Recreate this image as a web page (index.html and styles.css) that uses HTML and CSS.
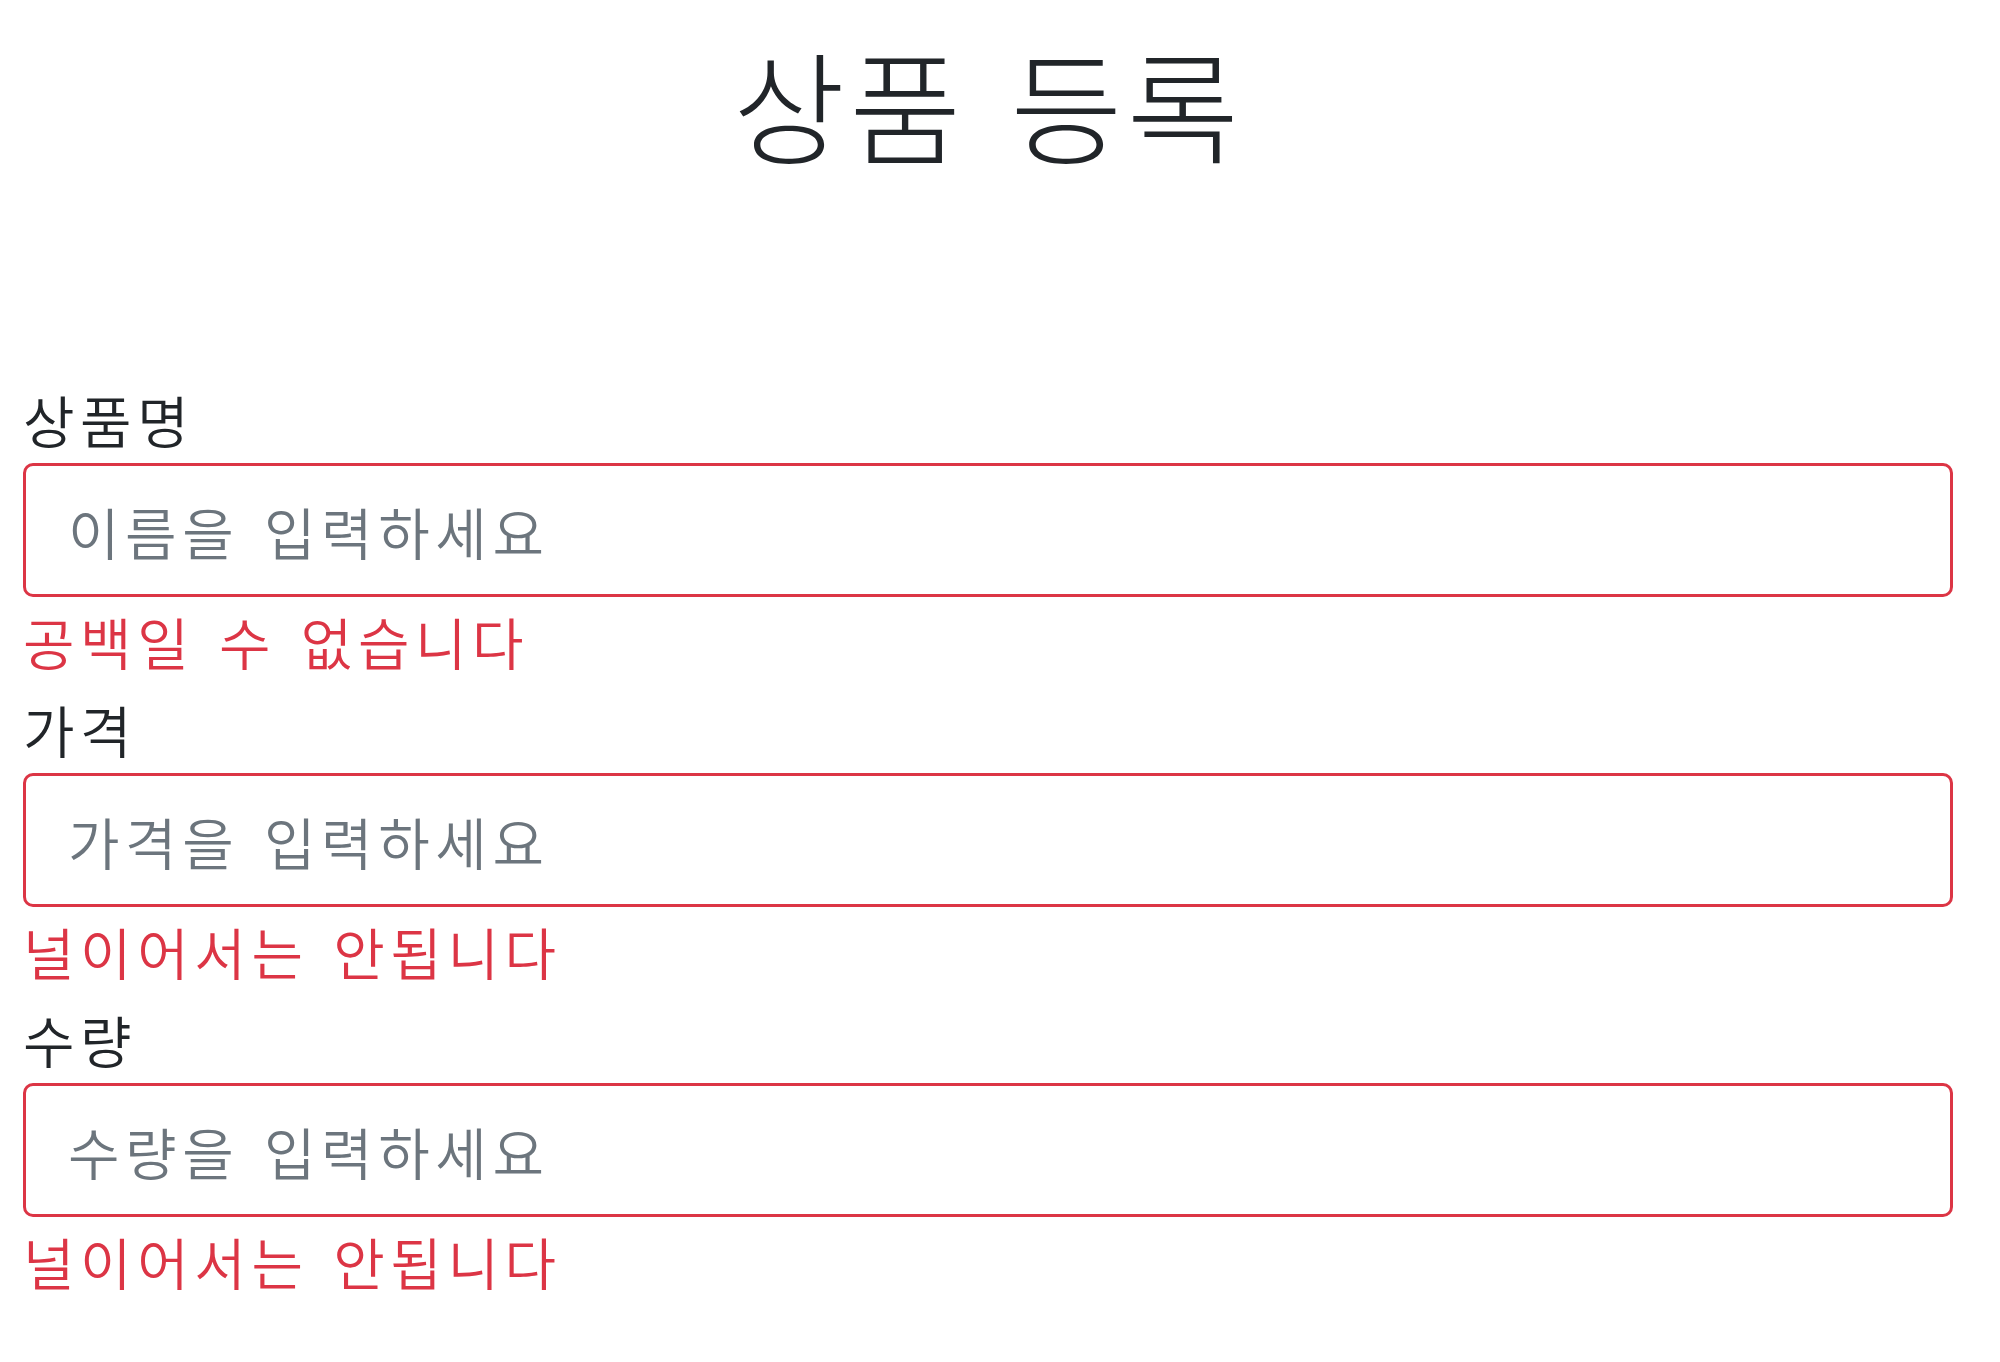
FILE: index.html
```html
<!DOCTYPE html>
<html lang="ko">
<head>
<meta charset="utf-8">
<title>상품 등록</title>
<link rel="stylesheet" href="styles.css">
</head>
<body>
<div class="container">
  <div class="page-header">
    <h2 class="title">상품 등록</h2>
  </div>
  <form class="form">
    <div class="field">
      <label class="label" for="itemName">상품명</label>
      <input class="control invalid" id="itemName" type="text" placeholder="이름을 입력하세요">
      <div class="feedback">공백일 수 없습니다</div>
    </div>
    <div class="field">
      <label class="label" for="price">가격</label>
      <input class="control invalid" id="price" type="text" placeholder="가격을 입력하세요">
      <div class="feedback">널이어서는 안됩니다</div>
    </div>
    <div class="field">
      <label class="label" for="quantity">수량</label>
      <input class="control invalid" id="quantity" type="text" placeholder="수량을 입력하세요">
      <div class="feedback">널이어서는 안됩니다</div>
    </div>
  </form>
</div>
</body>
</html>
```

FILE: styles.css
```css
html, body {
  margin: 0;
  padding: 0;
  background: #ffffff;
}

body {
  font-family: "Noto Sans CJK KR", "Noto Sans", sans-serif;
  color: #212529;
  font-size: 56px;
  font-weight: 350;
  letter-spacing: 0.1em;
  word-spacing: 0.06em;
}

.container {
  width: 1930px;
  margin-left: 23px;
}

.page-header {
  padding-top: 35px;
  text-align: center;
}

.title {
  margin: 0;
  font-size: 122px;
  font-weight: 300;
  line-height: 134px;
  letter-spacing: 0.035em;
  word-spacing: 0.05em;
  color: #212529;
}

.form {
  margin-top: 206px;
  display: flex;
  flex-direction: column;
}

.field {
  display: flex;
  flex-direction: column;
}

.label {
  display: block;
  line-height: 88px;
  height: 88px;
  color: #212529;
}

.control {
  box-sizing: border-box;
  width: 100%;
  height: 134px;
  margin: 0;
  padding: 0 42px;
  font-family: inherit;
  font-size: 56px;
  font-weight: 350;
  letter-spacing: 0.1em;
  word-spacing: 0.06em;
  color: #495057;
  background: #ffffff;
  border: 3px solid #ced4da;
  border-radius: 10px;
  outline: none;
}

.control::placeholder {
  color: #6c757d;
  opacity: 1;
}

.control.invalid {
  border-color: #dc3545;
}

.feedback {
  line-height: 88px;
  height: 88px;
  color: #dc3545;
}
```
